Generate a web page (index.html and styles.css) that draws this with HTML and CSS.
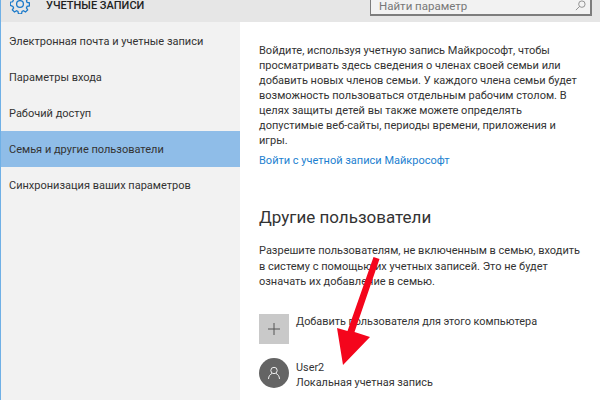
FILE: index.html
```html
<!DOCTYPE html>
<html lang="ru">
<head>
<meta charset="utf-8">
<title>Учетные записи</title>
<link rel="stylesheet" href="styles.css">
</head>
<body>
<div class="window">
  <header class="topbar">
    <svg class="gear" viewBox="0 0 20 20" width="20" height="20" fill="none" stroke="#1979ca" stroke-width="1.3"><path d="M8.4 1.2h3.2l.5 2.4 1.5.7 2.1-1.3 2.2 2.2-1.3 2.1.7 1.5 2.4.5v3.2l-2.4.5-.7 1.5 1.3 2.1-2.2 2.2-2.1-1.3-1.5.7-.5 2.4H8.4l-.5-2.4-1.5-.7-2.1 1.3-2.2-2.2 1.3-2.1-.7-1.5L0 11.9V8.7l2.4-.5.7-1.5-1.3-2.1L4 2.4l2.1 1.3 1.5-.7z" transform="translate(.3 -.2) scale(.97)"/><circle cx="10" cy="10" r="3.4"/></svg>
    <h1 class="title">УЧЕТНЫЕ ЗАПИСИ</h1>
    <div class="search">
      <span class="search-text">Найти параметр</span>
      <svg viewBox="0 0 12 12" width="11" height="11" fill="none" stroke="#8a8a8a" stroke-width="1"><circle cx="7.5" cy="4.5" r="3.5"/><path d="M5 7 1 11"/></svg>
    </div>
  </header>
  <div class="body">
    <nav class="side">
      <a class="item">Электронная почта и учетные записи</a>
      <a class="item">Параметры входа</a>
      <a class="item">Рабочий доступ</a>
      <a class="item active">Семья и другие пользователи</a>
      <a class="item">Синхронизация ваших параметров</a>
    </nav>
    <main class="content">
      <p class="para">Войдите, используя учетную запись Майкрософт, чтобы<br>просматривать здесь сведения о членах своей семьи или<br>добавить новых членов семьи. У каждого члена семьи будет<br>возможность пользоваться отдельным рабочим столом. В<br>целях защиты детей вы также можете определять<br>допустимые веб-сайты, периоды времени, приложения и<br>игры.</p>
      <a class="link">Войти с учетной записи Майкрософт</a>
      <h2 class="heading">Другие пользователи</h2>
      <p class="para narrow">Разрешите пользователям, не включенным в семью, входить<br>в систему с помощью их учетных записей. Это не будет<br>означать их добавление в семью.</p>
      <div class="row add">
        <div class="tile"><svg viewBox="0 0 12 12" width="12" height="12" stroke="#555" stroke-width="1"><path d="M6 0v12M0 6h12"/></svg></div>
        <div class="row-text">Добавить пользователя для этого компьютера</div>
      </div>
      <div class="row user">
        <div class="avatar"><svg viewBox="0 0 14 14" width="14" height="14" fill="none" stroke="#f0f0f0" stroke-width="1"><circle cx="7" cy="4.500" r="3.200"/><path d="M1.500 13c0-3 2-5 3.500-5.500M12.500 13c0-3-2-5-3.500-5.500"/></svg></div>
        <div class="row-text"><div>User2</div><div>Локальная учетная запись</div></div>
      </div>
    </main>
  </div>
  <svg class="arrow" viewBox="0 0 600 400" width="600" height="400"><path fill="#f4051c" d="M373.500 257 379.500 259 354.500 332 370 337 343 365 337 328 347.500 331z"/></svg>
</div>
</body>
</html>
```
FILE: styles.css
```css
* { box-sizing: border-box; }
html, body { margin: 0; padding: 0; }
body { width: 600px; height: 400px; overflow: hidden; background: #fff; font-family: Roboto, "Liberation Sans", sans-serif; color: #333; }
.window { position: relative; width: 600px; height: 400px; overflow: hidden; border-left: 1px solid #6fb0e6; }
.topbar { height: 22px; background: #e6e6e6; display: flex; align-items: flex-start; padding-left: 9px; }
.gear { margin-top: -6px; }
.title { margin: 0 0 0 16px; font-size: 11px; line-height: 11px; font-weight: 500; color: #222; }
.search { margin-left: auto; margin-right: 8px; width: 222px; height: 16px; background: #f2f2f2; border: 1px solid #7d7d7d; border-top: 0; border-bottom-width: 2px; border-right-width: 2px; display: flex; justify-content: space-between; padding: 0 4px 0 8px; align-items: flex-start; }
.search-text { font-size: 11.500px; line-height: 12px; color: #777; }
.body { display: flex; height: 378px; }
.side { flex: none; width: 239px; background: #f2f2f2; padding-top: 1px; display: flex; flex-direction: column; }
.item { height: 36px; display: flex; align-items: center; padding: 1px 0 0 8px; font-size: 11px; color: #333; }
.item.active { background: #8fbde8; margin-left: -1px; padding-left: 9px; }
.content { flex: 1; padding: 21px 0 0 19px; font-size: 11px; }
.para { margin: 0; line-height: 15px; white-space: nowrap; }
.narrow { line-height: 15.500px; }
.link { display: block; margin-top: 5px; line-height: 15px; color: #1c7fd0; }
.heading { margin: 37px 0 14px; font-size: 17px; line-height: 24px; font-weight: 400; color: #333; }
.row { display: flex; gap: 7px; }
.row-text { font-size: 10.850px; }
.add { margin-top: 24px; }
.tile { width: 30px; height: 30px; background: #c9c9c9; display: flex; align-items: center; justify-content: center; }
.add .row-text { line-height: 16px; }
.user { margin-top: 14px; }
.avatar { width: 30px; height: 30px; border-radius: 50%; background: #646464; display: flex; align-items: center; justify-content: center; }
.user .row-text { line-height: 15px; padding-top: 2px; }
.arrow { position: absolute; left: -1px; top: 0; }
```
